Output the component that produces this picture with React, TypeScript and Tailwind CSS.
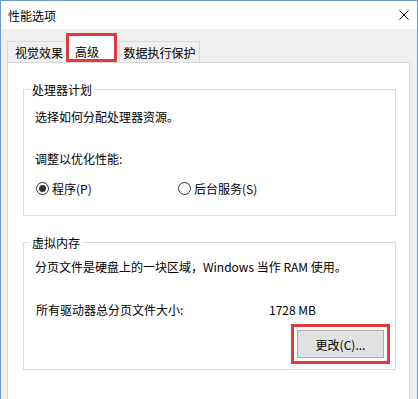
import React from 'react';

function Radio({ checked }: { checked?: boolean }) {
    return (
        <span className="w-[13px] h-[13px] rounded-full border border-[#333333] bg-white flex items-center justify-center shrink-0">
            {checked && <span className="w-[7px] h-[7px] rounded-full bg-[#333333]" />}
        </span>
    );
}

export default function App() {
    return (
        <div
            className="w-[418px] h-[399px] flex flex-col overflow-hidden border-x border-t border-[#6d9bd1] text-[12px] leading-[17px] text-black"
            style={{ fontFamily: '"Noto Sans CJK SC", "Noto Sans", sans-serif' }}
        >
            {/* Title bar */}
            <div className="h-[28px] bg-white flex items-center justify-between pl-[7px] pr-[8px] shrink-0">
                <span>性能选项</span>
                <svg width="10" height="10" viewBox="0 0 10 10">
                    <path d="M0.5 0.5 L9.5 9.5 M9.5 0.5 L0.5 9.5" stroke="#000" strokeWidth="1" />
                </svg>
            </div>

            {/* Body */}
            <div className="flex-1 flex flex-col bg-[#f0f0f0] pl-[6px] pr-[7px]">
                {/* Tabs */}
                <div className="h-[33px] flex items-end shrink-0">
                    <div className="h-[21px] w-[59px] border-t border-l border-[#d9d9d9] bg-[#f0f0f0] flex items-center pl-[7px]">
                        视觉效果
                    </div>
                    <div className="h-[29px] w-[51px] border-[3px] border-[#e0393e] bg-white pl-[6px] pt-[7px]">
                        高级
                    </div>
                    <div className="h-[21px] w-[81px] ml-[2px] border-t border-x border-[#d9d9d9] bg-[#f0f0f0] flex items-center justify-center">
                        数据执行保护
                    </div>
                </div>

                {/* Panel */}
                <div className="flex-1 bg-white border border-b-0 border-[#d9d9d9] pt-[18px] pl-[15px] pr-[13px]">
                    <fieldset className="border border-[#dcdcdc] px-[6px]">
                        <legend className="px-[2px]">处理器计划</legend>
                        <div className="pl-[5px] pt-[10px] pb-[18px]">
                            <div>选择如何分配处理器资源。</div>
                            <div className="mt-[25px]">调整以优化性能:</div>
                            <div className="mt-[13px] flex items-center">
                                <div className="w-[143px] flex items-center gap-[3px] pl-[1px]">
                                    <Radio checked />
                                    <span>程序(P)</span>
                                </div>
                                <div className="flex items-center gap-[3px]">
                                    <Radio />
                                    <span>后台服务(S)</span>
                                </div>
                            </div>
                        </div>
                    </fieldset>

                    <fieldset className="mt-[18px] border border-[#dcdcdc] px-[6px]">
                        <legend className="px-[2px]">虚拟内存</legend>
                        <div className="pl-[5px] pr-[5px] pt-[7px] pb-[11px]">
                            <div>分页文件是硬盘上的一块区域，Windows 当作 RAM 使用。</div>
                            <div className="mt-[26px] flex">
                                <span className="w-[234px] pl-[1px]">所有驱动器总分页文件大小:</span>
                                <span>1728 MB</span>
                            </div>
                            <div className="mt-[12px] flex justify-end">
                                <button className="w-[87px] h-[28px] bg-[#e1e1e1] border border-[#adadad] outline-[3px] outline-solid outline-[#e0393e] outline-offset-[3px]">
                                    更改(C)...
                                </button>
                            </div>
                        </div>
                    </fieldset>
                </div>
            </div>
        </div>
    );
}
